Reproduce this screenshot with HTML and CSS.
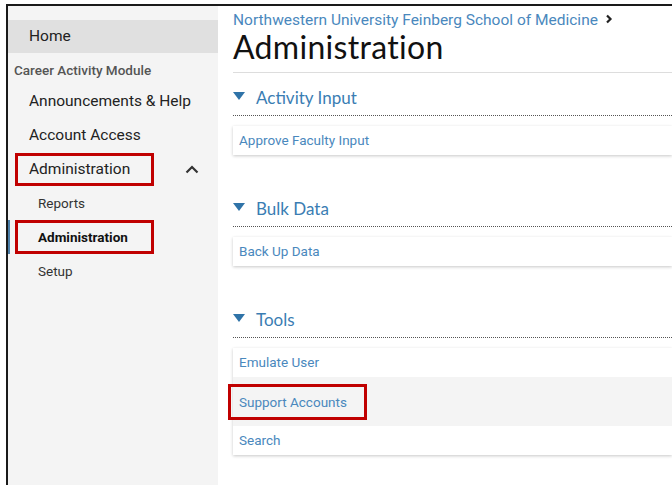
FILE: index.html
```html
<!DOCTYPE html>
<html lang="en">
<head>
<meta charset="utf-8">
<title>Administration</title>
<link rel="stylesheet" href="styles.css">
</head>
<body>
<div class="frame">
  <nav class="sidebar">
    <div class="nav-home">Home</div>
    <div class="nav-label">Career Activity Module</div>
    <div class="nav-item">Announcements &amp; Help</div>
    <div class="nav-item">Account Access</div>
    <div class="nav-item nav-group">
      <span class="mark mark-top">Administration</span>
      <svg class="chevron" width="14" height="9" viewBox="0 0 14 9"><polyline points="1.5,7.5 7,2 12.5,7.5" fill="none" stroke="#333" stroke-width="2.2"/></svg>
    </div>
    <div class="nav-sub">Reports</div>
    <div class="nav-sub nav-active"><span class="mark mark-sub">Administration</span></div>
    <div class="nav-sub">Setup</div>
  </nav>
  <main class="content">
    <div class="crumbs">Northwestern University Feinberg School of Medicine
      <svg class="crumb-sep" width="8" height="10" viewBox="0 0 8 10"><polyline points="2,1.5 5.5,5 2,8.5" fill="none" stroke="#222" stroke-width="2.2"/></svg>
    </div>
    <h1 class="title">Administration</h1>

    <section class="section first">
      <h2 class="section-head"><span class="caret"></span>Activity Input</h2>
      <div class="card">
        <div class="row">Approve Faculty Input</div>
      </div>
    </section>

    <section class="section">
      <h2 class="section-head"><span class="caret"></span>Bulk Data</h2>
      <div class="card">
        <div class="row">Back Up Data</div>
      </div>
    </section>

    <section class="section">
      <h2 class="section-head"><span class="caret"></span>Tools</h2>
      <div class="card">
        <div class="row">Emulate User</div>
        <div class="row row-hover"><span class="mark mark-row">Support Accounts</span></div>
        <div class="row">Search</div>
      </div>
    </section>
  </main>
</div>
</body>
</html>
```

FILE: styles.css
```css
html, body {
  margin: 0;
  padding: 0;
  background: #fff;
  overflow: hidden;
}

body {
  width: 672px;
  height: 485px;
  font-family: Roboto, "Liberation Sans", sans-serif;
}

.frame {
  margin: 4px 0 0 6px;
  width: 664px;
  height: 479px;
  overflow: hidden;
  border-top: 2px solid #1a1a1a;
  border-left: 2px solid #1a1a1a;
  display: flex;
}

/* Left navigation */
.sidebar {
  width: 210px;
  flex: none;
  background: #f4f4f4;
  padding-top: 14px;
  color: #222;
}

.nav-home {
  height: 33px;
  line-height: 33px;
  background: #e0e0e0;
  padding-left: 21px;
  font-size: 15.5px;
}

.nav-label {
  height: 31px;
  line-height: 34px;
  padding-left: 6px;
  font-size: 13.5px;
  font-weight: 500;
  color: #555;
}

.nav-item {
  height: 34px;
  line-height: 34px;
  padding-left: 21px;
  font-size: 15.5px;
}

.nav-group {
  display: flex;
  align-items: center;
  padding-left: 7px;
}

.chevron {
  margin-left: 31px;
}

.nav-sub {
  height: 34px;
  line-height: 34px;
  padding-left: 30px;
  font-size: 13.5px;
  color: #333;
}

.nav-active {
  padding-left: 7px;
  box-shadow: inset 2px 0 0 #4b7ea8;
  font-weight: 700;
  color: #111;
}

/* Red outline used to call out an entry */
.mark {
  display: inline-block;
  box-sizing: border-box;
  width: 139px;
  border: 3px solid #c00000;
}

.mark-top {
  height: 33px;
  line-height: 27px;
  padding-left: 11px;
  margin-top: 1px;
}

.mark-sub {
  height: 34px;
  line-height: 28px;
  padding-left: 20px;
}

/* Main column */
.content {
  flex: 1;
  padding-left: 15px;
  background: #fff;
  overflow: hidden;
}

.crumbs {
  margin-top: 4px;
  font-size: 15.5px;
  line-height: 20px;
  color: #4a88bd;
  white-space: nowrap;
}

.crumb-sep {
  margin-left: 3px;
  vertical-align: 1px;
}

.title {
  margin: 0;
  font-family: Lato, "Open Sans", sans-serif;
  font-weight: 400;
  font-size: 32px;
  letter-spacing: 0.3px;
  line-height: 34px;
  color: #111;
  padding-bottom: 8px;
  border-bottom: 1px solid #ddd;
}

.section {
  margin-top: 41px;
}

.section.first {
  margin-top: 12px;
}

.section-head {
  margin: 0;
  display: flex;
  align-items: center;
  height: 24px;
  padding-bottom: 6px;
  border-bottom: 1px dotted #555;
  font-family: Lato, "Open Sans", sans-serif;
  font-weight: 400;
  font-size: 17px;
  color: #3a7db3;
}

.caret {
  width: 0;
  height: 0;
  border-left: 6.5px solid transparent;
  border-right: 6.5px solid transparent;
  border-top: 8px solid #2f73a8;
  margin-right: 11px;
  margin-top: -3px;
}

.card {
  margin-top: 10px;
  background: #fff;
  box-shadow: 0 1px 3px rgba(0, 0, 0, 0.22);
}

.row {
  height: 29px;
  line-height: 29px;
  padding-left: 6px;
  font-size: 13.5px;
  color: #4a88bd;
}

.row-hover {
  height: 49px;
  line-height: 49px;
  background: #f4f4f4;
  display: flex;
  align-items: center;
}

.mark-row {
  width: 139px;
  height: 36px;
  line-height: 30px;
  margin-left: -11px;
  padding-left: 8px;
}
```
